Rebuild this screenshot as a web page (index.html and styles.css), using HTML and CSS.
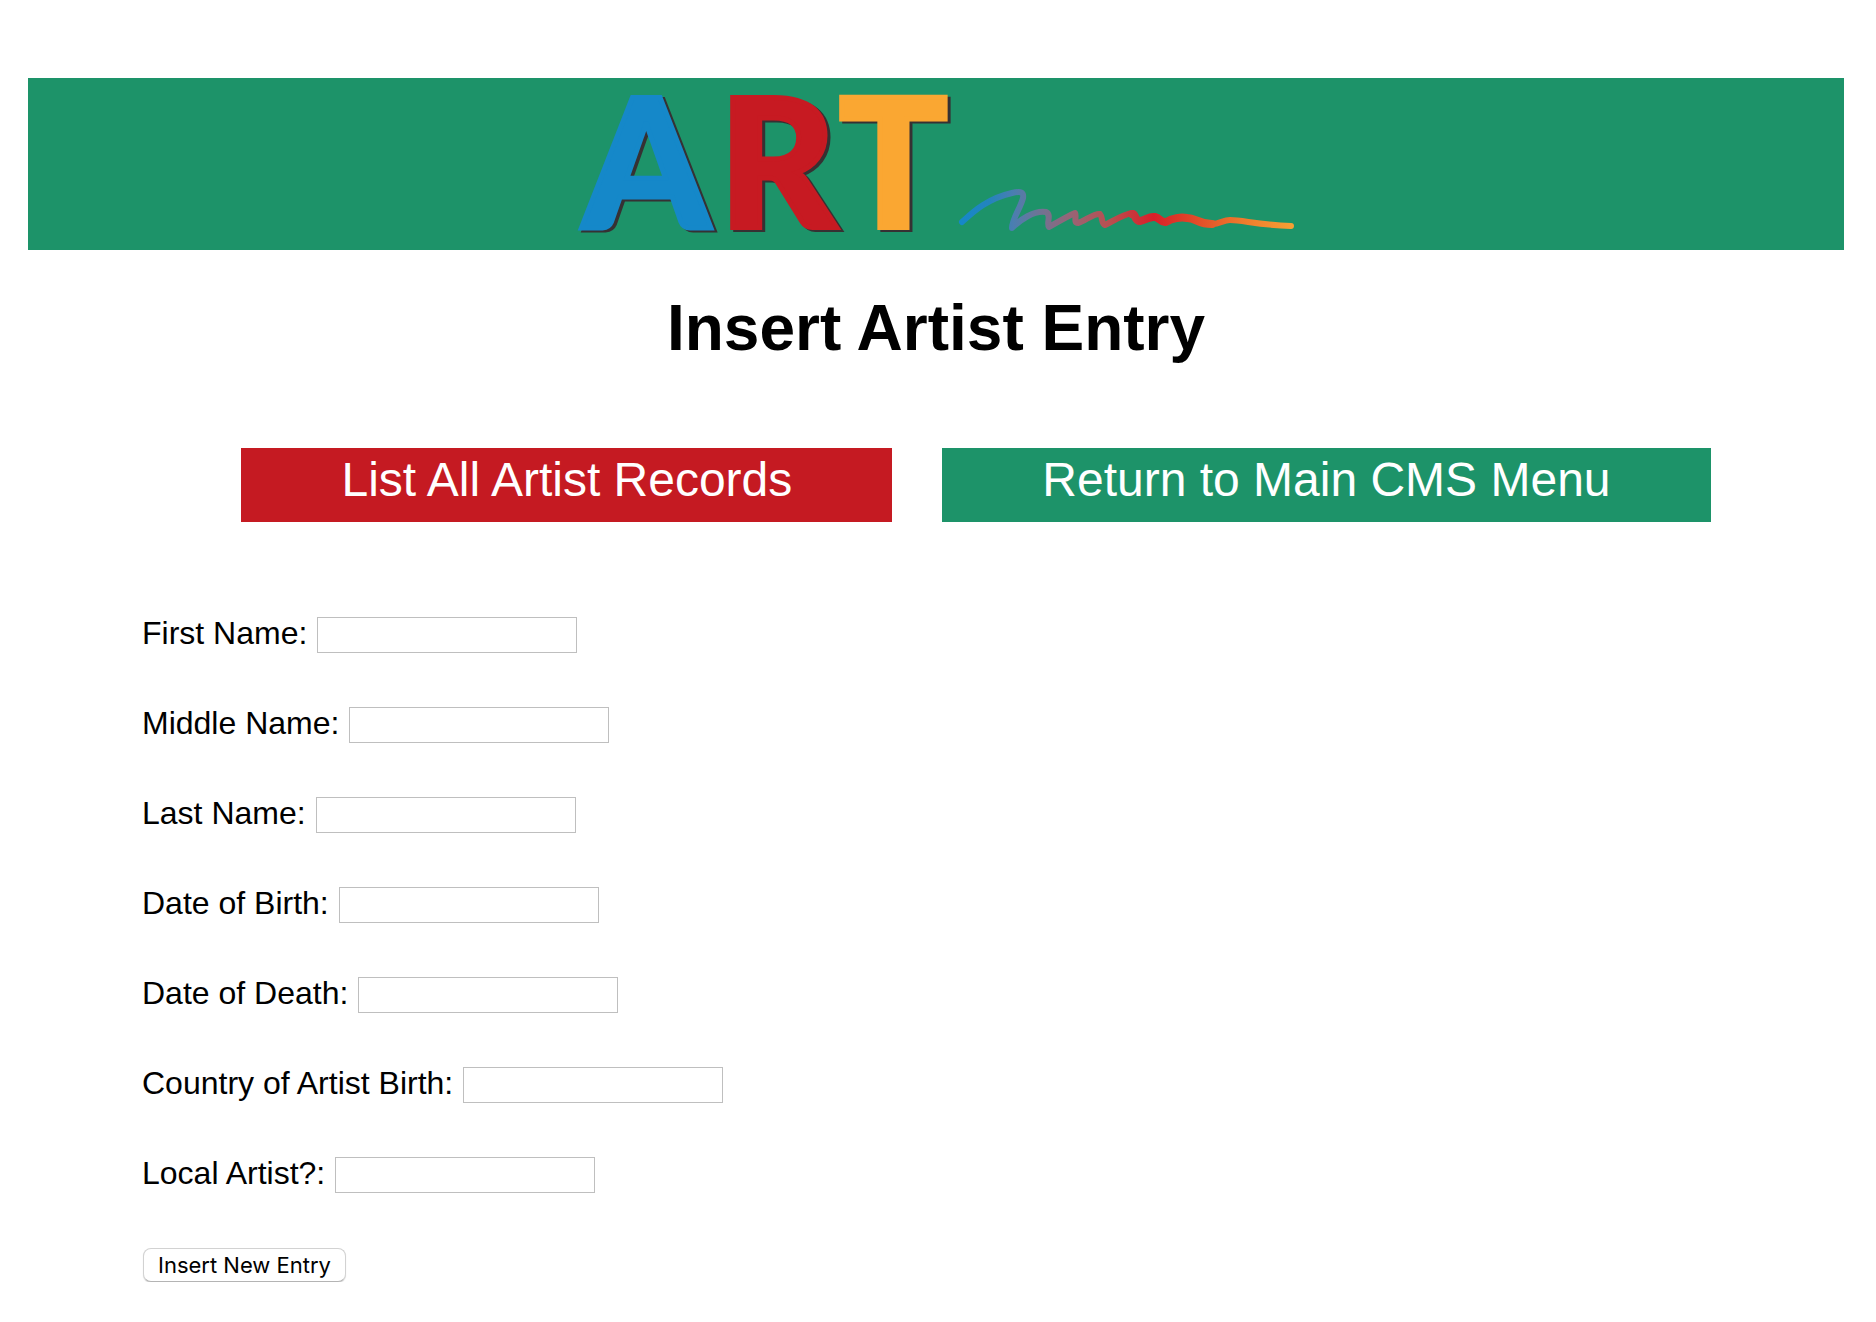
FILE: index.html
```html
<!DOCTYPE html>
<html lang="en">
<head>
<meta charset="utf-8">
<title>Insert Artist Entry</title>
<link rel="stylesheet" href="styles.css">
</head>
<body>
<header class="banner">
  <svg class="logo" viewBox="0 0 716 172" width="716" height="172" role="img" aria-label="ART">
    <defs>
      <linearGradient id="stroke-colors" gradientUnits="userSpaceOnUse" x1="382" y1="0" x2="715" y2="0">
        <stop offset="0" stop-color="#1588c9"/>
        <stop offset="0.09" stop-color="#2484bd"/>
        <stop offset="0.16" stop-color="#4b7eb0"/>
        <stop offset="0.23" stop-color="#6b7597"/>
        <stop offset="0.34" stop-color="#9a6373"/>
        <stop offset="0.45" stop-color="#b94f50"/>
        <stop offset="0.58" stop-color="#d81f29"/>
        <stop offset="0.68" stop-color="#df4128"/>
        <stop offset="0.84" stop-color="#ee782c"/>
        <stop offset="1" stop-color="#f7a034"/>
      </linearGradient>
    </defs>
    <g class="logo-shadow" aria-hidden="true">
      <text x="8" y="152">A</text>
      <text x="144" y="152">R</text>
      <text x="264" y="152">T</text>
    </g>
    <text class="logo-a" x="5" y="150">A</text>
    <text class="logo-r" x="141" y="150">R</text>
    <text class="logo-t" x="261" y="150">T</text>
    <path class="scribble" d="M384 144C392 137 407 121 434 115C443 113 446 114 445 120C443 129 434 141 434 150C442 142 456 132 468 134C474 137 468 145 471 149C478 145 490 138 497 135C499 138 495 145 500 145C507 143 516 135 522 136C525 139 523 146 527 147C535 143 546 136 554 135C558 135 556 143 562 143C568 142 571 138 577 139C582 140 583 145 588 144C594 140 603 139 609 140C618 140 620 146 634 146C642 146 645 142 652 142C665 142 680 147 713 148"/>
    <path class="scribble scribble-bold" d="M554 136C558 135 556 143 562 143C568 142 571 138 577 139C582 140 583 145 588 144C594 140 603 139 609 140C618 140 620 146 634 146"/>
  </svg>
</header>

<main>
  <h1 class="title">Insert Artist Entry</h1>

  <nav class="menu">
    <a class="menu-link menu-link-red" href="#list">List All Artist Records</a>
    <a class="menu-link menu-link-green" href="#menu">Return to Main CMS Menu</a>
  </nav>

  <form class="entry-form">
    <div class="field"><label for="first-name">First Name:</label><input type="text" id="first-name"></div>
    <div class="field"><label for="middle-name">Middle Name:</label><input type="text" id="middle-name"></div>
    <div class="field"><label for="last-name">Last Name:</label><input type="text" id="last-name"></div>
    <div class="field"><label for="birth-date">Date of Birth:</label><input type="text" id="birth-date"></div>
    <div class="field"><label for="death-date">Date of Death:</label><input type="text" id="death-date"></div>
    <div class="field"><label for="birth-country">Country of Artist Birth:</label><input type="text" id="birth-country"></div>
    <div class="field"><label for="local-artist">Local Artist?:</label><input type="text" id="local-artist"></div>
    <button class="submit" type="submit">Insert New Entry</button>
  </form>
</main>
</body>
</html>
```
FILE: styles.css
```css
* {
  box-sizing: border-box;
}

body {
  margin: 78px 32px 32px 28px;
  background: #fff;
  color: #000;
  font-family: "Liberation Sans", Arial, sans-serif;
  font-size: 32px;
}

.banner {
  display: flex;
  justify-content: center;
  background: #1d9369;
}

.logo {
  display: block;
  max-width: 100%;
  overflow: visible;
  font-family: Lato, sans-serif;
  font-size: 180px;
  font-weight: 900;
  stroke-width: 5;
}

.logo-shadow {
  fill: #363133;
  stroke: #363133;
}

.logo-a {
  fill: #1588c9;
  stroke: #1588c9;
}

.logo-r {
  fill: #c71a22;
  stroke: #c71a22;
}

.logo-t {
  fill: #faa732;
  stroke: #faa732;
}

.scribble {
  fill: none;
  stroke: url(#stroke-colors);
  stroke-width: 6;
  stroke-linecap: round;
  stroke-linejoin: round;
}

.scribble-bold {
  stroke-width: 8;
}

.title {
  margin: 40px 0 0;
  font-size: 64px;
  line-height: 76px;
  text-align: center;
}

.menu {
  display: flex;
  flex-wrap: wrap;
  justify-content: center;
  gap: 50px;
  margin-top: 82px;
  padding-left: 80px;
}

.menu-link {
  padding: 4px 100px 14px;
  color: #fff;
  font-size: 48px;
  line-height: 56px;
  text-decoration: none;
}

.menu-link-red {
  background: #c51a22;
}

.menu-link-green {
  background: #1d9369;
}

.entry-form {
  display: flex;
  flex-direction: column;
  align-items: flex-start;
  gap: 54px;
  margin-top: 95px;
  padding-left: 114px;
}

.field {
  display: flex;
  align-items: flex-start;
  gap: 10px;
  height: 36px;
  line-height: 32px;
}

.field input {
  width: 260px;
  height: 36px;
  padding: 2px 4px;
  border: 1px solid #bfbfbf;
  background: #fff;
  font: inherit;
  font-size: 22px;
}

.submit {
  height: 34px;
  margin-top: 1px;
  margin-left: 1px;
  padding: 0 14px;
  border: 1px solid #d2d2d2;
  border-bottom-color: #b4b4b4;
  border-radius: 8px;
  background: #fff;
  box-shadow: 0 1px 1px rgba(0, 0, 0, 0.15);
  color: #000;
  font-family: Inter, sans-serif;
  font-size: 22px;
  line-height: 32px;
}
```
